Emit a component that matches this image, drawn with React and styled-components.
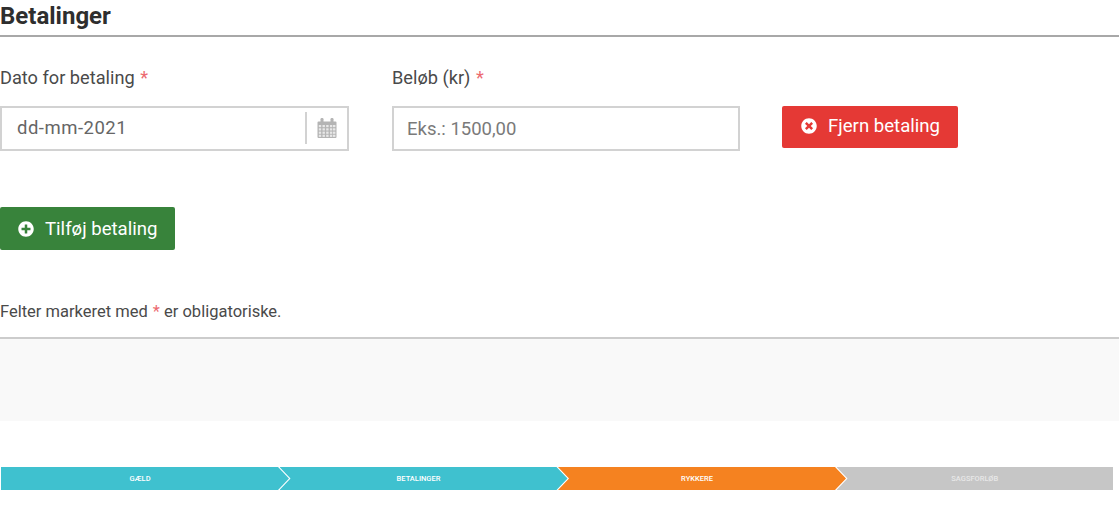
import React from "react";
import styled, { createGlobalStyle } from "styled-components";
import { FaTimesCircle, FaPlusCircle } from "react-icons/fa";

const Global = createGlobalStyle`
  html, body { margin: 0; padding: 0; background: #fff; }
  body { font-family: Roboto, "Liberation Sans", sans-serif; color: #333; }
  * { box-sizing: border-box; }
`;
const Page = styled.div`
  width: 1119px;
  height: 506px;
  overflow: hidden;
`;
const Heading = styled.h2`
  margin: 0;
  height: 37px;
  padding-top: 3px;
  font-size: 24px;
  line-height: 26px;
  font-weight: 700;
  color: #2e2e2e;
  border-bottom: 2px solid #a8a8a8;
`;
const FormRow = styled.div`
  display: flex;
  align-items: flex-start;
  gap: 43px;
  padding-top: 30px;
`;
const Field = styled.div`
  display: flex;
  flex-direction: column;
  gap: 17px;
  width: ${(p) => p.$width}px;
`;
const Label = styled.label`
  font-size: 18.2px;
  line-height: 22px;
  color: #4a4a4a;
`;
const Star = styled.span`
  color: #ec6a70;
  margin-left: 1px;
`;
const InputBox = styled.div`
  display: flex;
  align-items: center;
  height: 45px;
  border: 2px solid #d2d2d2;
  padding-left: ${(p) => p.$pad}px;
  padding-bottom: ${(p) => p.$lift || 0}px;
  font-size: 18.5px;
  color: ${(p) => p.$color};
  letter-spacing: ${(p) => p.$spacing || 0}px;
`;
const BoxText = styled.span`
  flex: 1;
`;
const IconSlot = styled.span`
  display: flex;
  align-items: center;
  justify-content: center;
  width: 42px;
  height: 32px;
  border-left: 2px solid #d2d2d2;
`;
const Button = styled.button`
  display: inline-flex;
  align-items: center;
  gap: 11px;
  height: ${(p) => p.$h}px;
  width: ${(p) => p.$w}px;
  padding: 0 0 ${(p) => p.$lift || 0}px ${(p) => p.$pad}px;
  border: 0;
  border-radius: 2px;
  background: ${(p) => p.$bg};
  color: #fff;
  font-family: inherit;
  font-size: 18.6px;
  font-weight: 400;
  white-space: nowrap;
`;
const AddRow = styled.div`
  padding-top: 56px;
`;
const RemoveCell = styled.div`
  padding-top: 39px;
  margin-left: -1px;
`;
const Note = styled.p`
  margin: 0;
  padding-top: 52px;
  height: 89px;
  font-size: 16.5px;
  line-height: 20px;
  color: #4a4a4a;
  border-bottom: 2px solid #ccc;
`;
const Panel = styled.div`
  height: 82px;
  background: #f9f9f9;
`;
const Steps = styled.div`
  display: flex;
  width: 1112px;
  height: 23px;
  margin: 46px 0 0 1px;
`;
const Step = styled.div`
  flex: ${(p) => (p.$last ? "1" : "0 0 288px")};
  display: flex;
  align-items: center;
  justify-content: center;
  margin-left: ${(p) => (p.$first ? 0 : -9.5)}px;
  padding-right: ${(p) => (p.$last ? 0 : 10)}px;
  background: ${(p) => p.$bg};
  color: ${(p) => p.$fg || "#fff"};
  font-size: 7.5px;
  font-weight: 500;
  text-transform: uppercase;
  clip-path: ${(p) =>
    p.$last
      ? "polygon(0 0, 100% 0, 100% 100%, 0 100%, 11px 50%)"
      : p.$first
      ? "polygon(0 0, calc(100% - 11px) 0, 100% 50%, calc(100% - 11px) 100%, 0 100%)"
      : "polygon(0 0, calc(100% - 11px) 0, 100% 50%, calc(100% - 11px) 100%, 0 100%, 11px 50%)"};
`;

const CalendarIcon = () => (
  <svg width="20" height="20" viewBox="0 0 20 20" fill="#b4b4b4">
    <rect x="3.5" y="0" width="3" height="5" rx="1.2" />
    <rect x="13.5" y="0" width="3" height="5" rx="1.2" />
    <path d="M0.5 4.5a1 1 0 0 1 1-1h17a1 1 0 0 1 1 1v14.5a1 1 0 0 1-1 1h-17a1 1 0 0 1-1-1z" />
    <g fill="#fff" opacity="0.7">
      {[7, 10.3, 13.6, 16.7].map((y) =>
        [1.8, 5.5, 9.2, 12.9, 16].map((x) => (
          <rect key={`${x}-${y}`} x={x} y={y} width="2.4" height="2.2" />
        ))
      )}
    </g>
  </svg>
);

export default function App() {
  return (
    <Page>
      <Global />
      <Heading>Betalinger</Heading>
      <FormRow>
        <Field $width={349}>
          <Label>
            Dato for betaling <Star>*</Star>
          </Label>
          <InputBox $pad={15} $color="#666" $spacing={0.5} $lift={2}>
            <BoxText>dd-mm-2021</BoxText>
            <IconSlot>
              <CalendarIcon />
            </IconSlot>
          </InputBox>
        </Field>
        <Field $width={348}>
          <Label>
            Beløb (kr) <Star>*</Star>
          </Label>
          <InputBox $pad={13} $color="#7a7a7a">
            <BoxText>Eks.: 1500,00</BoxText>
          </InputBox>
        </Field>
        <RemoveCell>
          <Button $bg="#e53935" $w={176} $h={42} $pad={19} $lift={2}>
            <FaTimesCircle size={16} />
            Fjern betaling
          </Button>
        </RemoveCell>
      </FormRow>
      <AddRow>
        <Button $bg="#38833b" $w={175} $h={43} $pad={18}>
          <FaPlusCircle size={16} />
          Tilføj betaling
        </Button>
      </AddRow>
      <Note>
        Felter markeret med <Star>*</Star> er obligatoriske.
      </Note>
      <Panel />
      <Steps>
        <Step $first $bg="#3fc1cf">Gæld</Step>
        <Step $bg="#3fc1cf">Betalinger</Step>
        <Step $bg="#f58220">Rykkere</Step>
        <Step $last $bg="#c6c6c6" $fg="#e8e8e8">Sagsforløb</Step>
      </Steps>
    </Page>
  );
}
